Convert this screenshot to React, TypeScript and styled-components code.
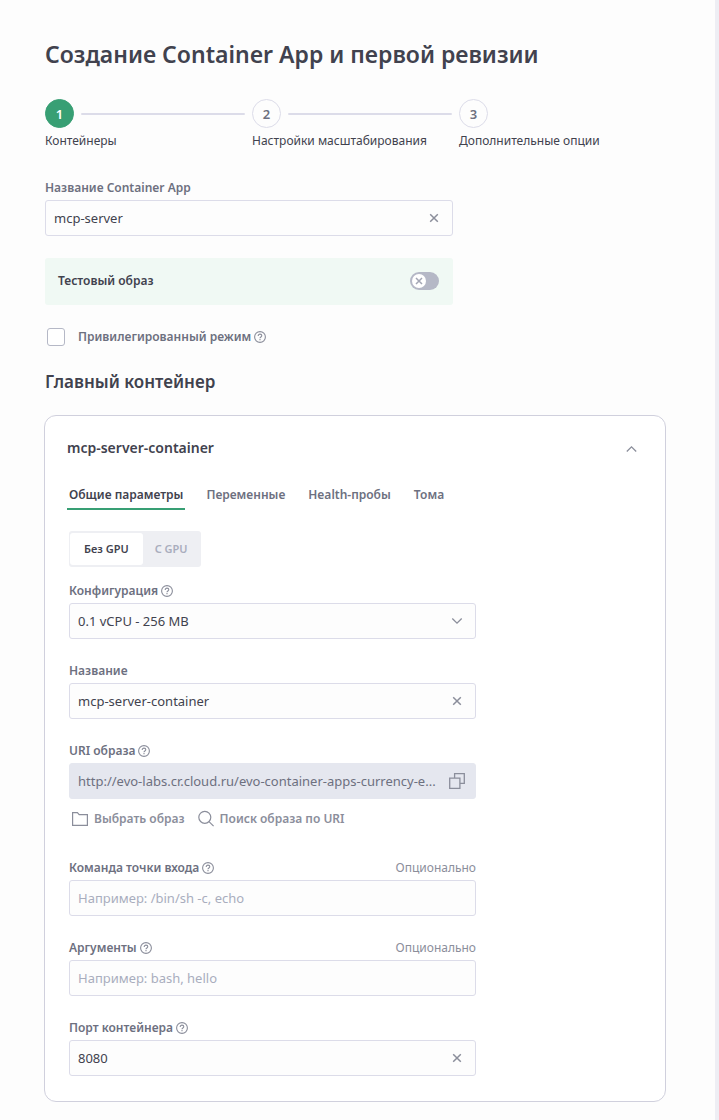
import React, { useState } from "react";
import styled, { createGlobalStyle } from "styled-components";

const color = {
  text: "#41424e",
  label: "#6d707f",
  muted: "#8b8e9b",
  placeholder: "#a9adbd",
  border: "#dcdce9",
  cardBorder: "#d0d0dd",
  green: "#389f74",
  page: "#fdfdfd",
};

const GlobalStyle = createGlobalStyle`
  * { box-sizing: border-box; }
  body {
    margin: 0;
    background: ${color.page};
    color: ${color.text};
    font-family: "Noto Sans", "Open Sans", sans-serif;
    font-size: 13px;
    line-height: 20px;
  }
  button, input, select { font: inherit; color: inherit; }
  button { padding: 0; border: 0; background: none; cursor: pointer; }
  h1, h2, h3, ol { margin: 0; padding: 0; }
`;

const Page = styled.main`
  min-height: 100vh;
  padding: 36px 49px 19px 45px;
  border-right: 4px solid #eeeef4;
`;

const Title = styled.h1`
  font-size: 23px;
  line-height: 36px;
  font-weight: 600;
`;

const Stepper = styled.ol`
  display: grid;
  grid-template-columns: repeat(3, 1fr);
  margin: 27px 0;
  list-style: none;
`;

const Step = styled.li`
  display: flex;
  flex-direction: column;
  gap: 3px;
  font-size: 12px;
  white-space: nowrap;
`;

const StepTrack = styled.div`
  display: flex;
  align-items: center;
  gap: 7px;
  padding-right: 7px;
`;

const StepNumber = styled.span<{ $active?: boolean }>`
  display: flex;
  align-items: center;
  justify-content: center;
  width: 29px;
  height: 29px;
  border: 1px solid ${(p) => (p.$active ? color.green : color.border)};
  border-radius: 50%;
  background: ${(p) => (p.$active ? color.green : "transparent")};
  color: ${(p) => (p.$active ? "#fff" : color.label)};
  font-size: 13px;
  font-weight: 600;
`;

const StepLine = styled.span`
  flex: 1;
  height: 2px;
  border-radius: 1px;
  background: ${color.border};
`;

const FieldBox = styled.div`
  max-width: 408px;
`;

const LabelRow = styled.div`
  display: flex;
  justify-content: space-between;
  height: 20px;
  margin-bottom: 2px;
`;

const LabelGroup = styled.div`
  display: flex;
  align-items: center;
  gap: 3px;
`;

const Label = styled.label`
  color: ${color.label};
  font-size: 12px;
  font-weight: 600;
`;

const Optional = styled.span`
  color: ${color.muted};
  font-size: 12px;
`;

const Control = styled.div<{ $filled?: boolean }>`
  display: flex;
  align-items: center;
  height: 36px;
  padding-right: 10px;
  border: 1px solid ${(p) => (p.$filled ? "#e5e7ef" : color.border)};
  border-radius: 3px;
  background: ${(p) => (p.$filled ? "#e5e7ef" : color.page)};
  color: ${(p) => (p.$filled ? color.label : color.text)};
`;

const Input = styled.input`
  flex: 1;
  min-width: 0;
  height: 34px;
  padding: 0 0 0 8px;
  border: 0;
  outline: 0;
  background: transparent;
  text-overflow: ellipsis;
  &::placeholder {
    color: ${color.placeholder};
    opacity: 1;
  }
`;

const Select = styled.select`
  flex: 1;
  min-width: 0;
  height: 34px;
  margin-right: -16px;
  padding: 0 16px 0 8px;
  border: 0;
  outline: 0;
  background: transparent;
  appearance: none;
`;

const IconButton = styled.button`
  display: flex;
  color: ${color.muted};
`;

const IconMark = styled.span`
  display: flex;
  color: ${color.muted};
  pointer-events: none;
`;

const TestImage = styled.label`
  display: flex;
  align-items: center;
  justify-content: space-between;
  max-width: 408px;
  height: 47px;
  margin-top: 22px;
  padding: 0 14px 2px 13px;
  border-radius: 3px;
  background: #f0f9f4;
  font-size: 12px;
  font-weight: 600;
`;

const Switch = styled.span`
  display: grid;
  width: 29px;
  height: 18px;
  color: #a3a6b4;
  > * {
    grid-area: 1 / 1;
  }
`;

const SwitchInput = styled.input`
  appearance: none;
  width: 29px;
  height: 18px;
  margin: 0;
  border-radius: 9px;
  background: #b5b8c6;
  cursor: pointer;
  &:checked {
    background: ${color.green};
  }
`;

const SwitchKnob = styled.span`
  display: flex;
  align-items: center;
  justify-content: center;
  width: 14px;
  height: 14px;
  margin: 2px;
  border-radius: 50%;
  background: #fff;
  pointer-events: none;
  ${SwitchInput}:checked + & {
    justify-self: end;
  }
`;

const CheckRow = styled.div`
  display: flex;
  align-items: center;
  height: 20px;
  margin-top: 22px;
  padding-left: 2px;
`;

const Checkbox = styled.input`
  appearance: none;
  width: 18px;
  height: 18px;
  margin: 0 13px 0 0;
  border: 1px solid #b5b8c6;
  border-radius: 3px;
  background: #fff;
  &:checked {
    background: ${color.green};
  }
`;

const SectionTitle = styled.h2`
  margin-top: 23px;
  font-size: 17px;
  line-height: 24px;
  font-weight: 600;
`;

const Card = styled.section`
  margin: 21px 0 0 -1px;
  padding: 20px 24px 25px;
  border: 1px solid ${color.cardBorder};
  border-radius: 12px;
  background: #fff;
`;

const CardHeader = styled.header`
  display: flex;
  align-items: center;
  justify-content: space-between;
  margin: 0 2px 0 -2px;
`;

const CardTitle = styled.h3`
  font-size: 14px;
  line-height: 24px;
  font-weight: 600;
`;

const Tabs = styled.div`
  display: flex;
  gap: 19px;
  margin: 25px 0 0 -2px;
`;

const Tab = styled.button<{ $active?: boolean }>`
  height: 25px;
  padding: 0 2px 3px;
  border-bottom: 2px solid ${(p) => (p.$active ? color.green : "transparent")};
  color: ${(p) => (p.$active ? color.text : color.label)};
  font-size: 12px;
  font-weight: 600;
  white-space: nowrap;
`;

const Segments = styled.div`
  display: inline-flex;
  height: 36px;
  margin: 21px 0 14px;
  padding: 2px 1px;
  border-radius: 3px;
  background: #eeeff3;
`;

const Segment = styled.button<{ $active?: boolean }>`
  padding: 0 14px;
  border-radius: 3px;
  background: ${(p) => (p.$active ? "#fff" : "transparent")};
  color: ${(p) => (p.$active ? color.text : color.placeholder)};
  font-size: 11px;
  font-weight: 600;
  &:last-child {
    padding: 0 12px;
  }
`;

const Fields = styled.div`
  display: flex;
  flex-direction: column;
  gap: 22px;
  max-width: 407px;
`;

const Actions = styled.div`
  display: flex;
  gap: 12px;
  height: 24px;
  margin: 8px 0 5px 2px;
`;

const Action = styled.button`
  display: flex;
  align-items: center;
  gap: 5px;
  color: ${color.muted};
  font-size: 12px;
  font-weight: 600;
`;

const svgProps = { fill: "none", stroke: "currentColor", "aria-hidden": true } as const;

const CrossIcon = () => (
  <svg {...svgProps} width="16" height="16" viewBox="0 0 16 16" strokeWidth="1.5">
    <path d="M4.2 4.2l7.6 7.6M11.8 4.2l-7.6 7.6" />
  </svg>
);

const KnobCross = () => (
  <svg {...svgProps} width="8" height="8" viewBox="0 0 8 8" strokeWidth="1.5">
    <path d="M1 1l6 6M7 1L1 7" />
  </svg>
);

const ChevronDown = () => (
  <svg {...svgProps} width="16" height="16" viewBox="0 0 16 16" strokeWidth="1.3">
    <path d="M3.3 5.5L8 10.2l4.7-4.7" />
  </svg>
);

const ChevronUp = () => (
  <svg {...svgProps} width="16" height="16" viewBox="0 0 16 16" strokeWidth="1.3">
    <path d="M3.8 11.5l4.7-4.7 4.7 4.7" />
  </svg>
);

const HelpIcon = () => (
  <svg {...svgProps} width="12" height="12" viewBox="0 0 12 12" strokeWidth="1.1">
    <circle cx="6" cy="6" r="5.4" />
    <path d="M4.2 4.9c0-1.1.8-1.8 1.8-1.8s1.8.7 1.8 1.6c0 1.2-1.8 1.3-1.8 2.5M6 8v1.2" />
  </svg>
);

const CopyIcon = () => (
  <svg {...svgProps} width="16" height="16" viewBox="0 0 16 16" strokeWidth="1.3">
    <path d="M5.6 5V.7h9.7v9.7H11" />
    <path d="M.7 5.1h10.2v10.2H.7z" />
  </svg>
);

const FolderIcon = () => (
  <svg {...svgProps} width="18" height="18" viewBox="0 0 18 18" strokeWidth="1.2">
    <path d="M1.6 2.6h4.8l1.8 2h8.2v10.8H1.6z" />
  </svg>
);

const SearchIcon = () => (
  <svg {...svgProps} width="18" height="18" viewBox="0 0 18 18" strokeWidth="1.2">
    <circle cx="7.8" cy="7.3" r="6" />
    <path d="M12 11.6l4.6 4.6" />
  </svg>
);

const Help = () => (
  <IconButton type="button" aria-label="Справка">
    <HelpIcon />
  </IconButton>
);

type FieldProps = {
  id: string;
  label: string;
  help?: boolean;
  optional?: boolean;
  filled?: boolean;
  children: React.ReactNode;
};

const Field = ({ id, label, help, optional, filled, children }: FieldProps) => (
  <FieldBox>
    <LabelRow>
      <LabelGroup>
        <Label htmlFor={id}>{label}</Label>
        {help && <Help />}
      </LabelGroup>
      {optional && <Optional>Опционально</Optional>}
    </LabelRow>
    <Control $filled={filled}>{children}</Control>
  </FieldBox>
);

const ClearableInput = ({ id, initial }: { id: string; initial: string }) => {
  const [value, setValue] = useState(initial);
  return (
    <>
      <Input id={id} value={value} onChange={(e) => setValue(e.target.value)} />
      <IconButton type="button" aria-label="Очистить" onClick={() => setValue("")}>
        <CrossIcon />
      </IconButton>
    </>
  );
};

const steps = ["Контейнеры", "Настройки масштабирования", "Дополнительные опции"];
const tabs = ["Общие параметры", "Переменные", "Health-пробы", "Тома"];

export default function App() {
  const [tab, setTab] = useState(0);
  const [gpu, setGpu] = useState(false);

  return (
    <>
      <GlobalStyle />
      <Page>
        <Title>Создание Container App и первой ревизии</Title>

        <Stepper>
          {steps.map((name, i) => (
            <Step key={name}>
              <StepTrack>
                <StepNumber $active={i === 0}>{i + 1}</StepNumber>
                {i < steps.length - 1 && <StepLine />}
              </StepTrack>
              <span>{name}</span>
            </Step>
          ))}
        </Stepper>

        <Field id="app-name" label="Название Container App">
          <ClearableInput id="app-name" initial="mcp-server" />
        </Field>

        <TestImage>
          Тестовый образ
          <Switch>
            <SwitchInput type="checkbox" role="switch" />
            <SwitchKnob>
              <KnobCross />
            </SwitchKnob>
          </Switch>
        </TestImage>

        <CheckRow>
          <Checkbox type="checkbox" id="privileged" />
          <LabelGroup>
            <Label htmlFor="privileged">Привилегированный режим</Label>
            <Help />
          </LabelGroup>
        </CheckRow>

        <SectionTitle>Главный контейнер</SectionTitle>

        <Card>
          <CardHeader>
            <CardTitle>mcp-server-container</CardTitle>
            <IconButton type="button" aria-label="Свернуть">
              <ChevronUp />
            </IconButton>
          </CardHeader>

          <Tabs role="tablist">
            {tabs.map((name, i) => (
              <Tab
                key={name}
                type="button"
                role="tab"
                aria-selected={tab === i}
                $active={tab === i}
                onClick={() => setTab(i)}
              >
                {name}
              </Tab>
            ))}
          </Tabs>

          <Segments>
            <Segment type="button" $active={!gpu} onClick={() => setGpu(false)}>
              Без GPU
            </Segment>
            <Segment type="button" $active={gpu} onClick={() => setGpu(true)}>
              С GPU
            </Segment>
          </Segments>

          <Fields>
            <Field id="config" label="Конфигурация" help>
              <Select id="config">
                <option>0.1 vCPU - 256 MB</option>
              </Select>
              <IconMark>
                <ChevronDown />
              </IconMark>
            </Field>

            <Field id="name" label="Название">
              <ClearableInput id="name" initial="mcp-server-container" />
            </Field>

            <div>
              <Field id="uri" label="URI образа" help filled>
                <Input
                  id="uri"
                  readOnly
                  value="http://evo-labs.cr.cloud.ru/evo-container-apps-currency-e..."
                />
                <IconButton type="button" aria-label="Копировать">
                  <CopyIcon />
                </IconButton>
              </Field>
              <Actions>
                <Action type="button">
                  <FolderIcon />
                  Выбрать образ
                </Action>
                <Action type="button">
                  <SearchIcon />
                  Поиск образа по URI
                </Action>
              </Actions>
            </div>

            <Field id="command" label="Команда точки входа" help optional>
              <Input id="command" placeholder="Например: /bin/sh -c, echo" />
            </Field>

            <Field id="args" label="Аргументы" help optional>
              <Input id="args" placeholder="Например: bash, hello" />
            </Field>

            <Field id="port" label="Порт контейнера" help>
              <ClearableInput id="port" initial="8080" />
            </Field>
          </Fields>
        </Card>
      </Page>
    </>
  );
}
